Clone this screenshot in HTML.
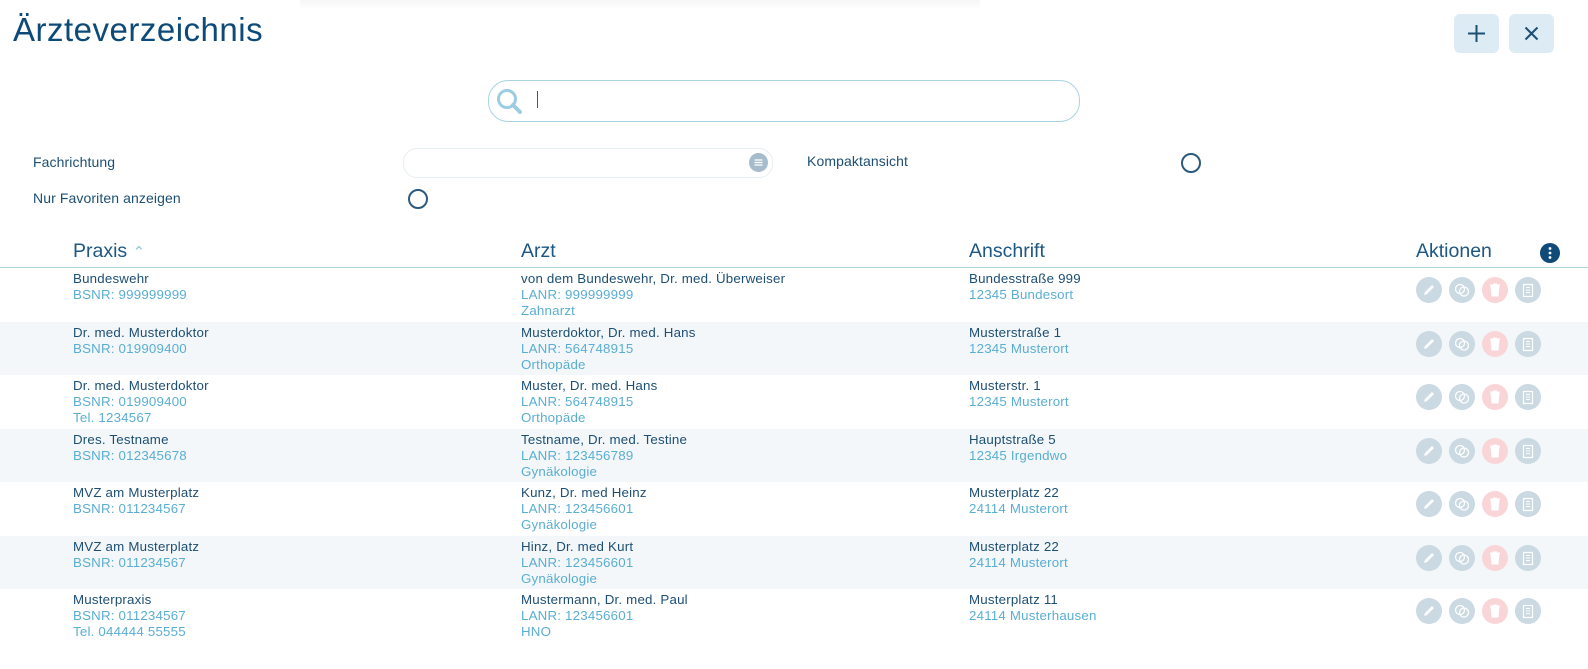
<!DOCTYPE html><html><head><meta charset="utf-8"><style>
body{margin:0;width:1588px;height:669px;overflow:hidden;background:#fff;font-family:"Liberation Sans",sans-serif;position:relative;color:#1d4f73}
.a{position:absolute}
h1{position:absolute;left:13px;top:11px;margin:0;font-weight:normal;font-size:33px;color:#0e4a78;letter-spacing:0.5px}
.btn{position:absolute;top:14px;width:45px;height:39px;background:#dcebf4;border-radius:6px}
.lbl{position:absolute;font-size:14px;color:#1d4f73;letter-spacing:0.1px}
.rad{position:absolute;width:16px;height:16px;border:2px solid #2b5a80;border-radius:50%}
.hd{position:absolute;top:240px;font-size:19.5px;color:#1d5784}
.row{position:absolute;left:0;width:1588px;height:53px}
.row.g{background:#f3f7f9}
.c{position:absolute;top:3px;font-size:13.3px;line-height:16px;letter-spacing:0.2px}
.c .l{color:#5aaed3}
.ic{position:absolute;top:9px;width:26px;height:26px;border-radius:50%;background:#cbd9e2}
.ic svg{position:absolute;left:0;top:0}
</style></head><body>
<div class="a" style="left:300px;top:0;width:680px;height:10px;background:linear-gradient(#f6f6f6,#fff)"></div>
<h1>Ärzteverzeichnis</h1>
<div class="btn" style="left:1454px"><svg width="45" height="39"><path d="M22.5 11v17M14 19.5h17" stroke="#1d4f73" stroke-width="2"/></svg></div>
<div class="btn" style="left:1509px"><svg width="45" height="39"><path d="M16.5 13.5l12 12M28.5 13.5l-12 12" stroke="#1d4f73" stroke-width="2"/></svg></div>
<div class="a" style="left:488px;top:80px;width:590px;height:40px;border:1px solid #a9d3e3;border-radius:20px"></div>
<svg class="a" style="left:494px;top:86px" width="32" height="30"><circle cx="13" cy="13" r="8.5" fill="none" stroke="#9ccde3" stroke-width="3"/><path d="M19 19l7 7" stroke="#9ccde3" stroke-width="4" stroke-linecap="round"/></svg>
<div class="a" style="left:537px;top:91px;width:1px;height:17px;background:#555"></div>
<div class="lbl" style="left:33px;top:154px">Fachrichtung</div>
<div class="lbl" style="left:33px;top:190px">Nur Favoriten anzeigen</div>
<div class="lbl" style="left:807px;top:153px">Kompaktansicht</div>
<div class="a" style="left:403px;top:148px;width:368px;height:28px;border:1px solid #e6eef2;border-radius:14px"></div>
<div class="a" style="left:749px;top:153px;width:19px;height:19px;border-radius:50%;background:#a6bccc"><svg width="19" height="19"><path d="M5.5 7h8M5.5 9.5h8M5.5 12h8" stroke="#fff" stroke-width="1.3"/></svg></div>
<div class="rad" style="left:1181px;top:153px"></div>
<div class="rad" style="left:408px;top:189px"></div>
<div class="hd" style="left:73px">Praxis <span style="color:#8fc6dc;font-size:15px">&#8963;</span></div>
<div class="hd" style="left:521px">Arzt</div>
<div class="hd" style="left:969px">Anschrift</div>
<div class="hd" style="left:1416px">Aktionen</div>
<div class="a" style="left:1540px;top:243px;width:20px;height:20px;border-radius:50%;background:#0f4a78"><svg width="20" height="20"><circle cx="10" cy="5.5" r="1.4" fill="#fff"/><circle cx="10" cy="10" r="1.4" fill="#fff"/><circle cx="10" cy="14.5" r="1.4" fill="#fff"/></svg></div>
<div class="a" style="left:0;top:267px;width:1588px;height:1px;background:#a8d2dc"></div>
<div id="rows"></div>
<script>
var d=[["Bundeswehr","BSNR: 999999999","","von dem Bundeswehr, Dr. med.  Überweiser","LANR: 999999999","Zahnarzt","Bundesstraße 999","12345 Bundesort"],
["Dr. med. Musterdoktor","BSNR: 019909400","","Musterdoktor, Dr. med. Hans","LANR: 564748915","Orthopäde","Musterstraße 1","12345 Musterort"],
["Dr. med. Musterdoktor","BSNR: 019909400","Tel. 1234567","Muster, Dr. med. Hans","LANR: 564748915","Orthopäde","Musterstr. 1","12345 Musterort"],
["Dres. Testname","BSNR: 012345678","","Testname, Dr. med. Testine","LANR: 123456789","Gynäkologie","Hauptstraße 5","12345 Irgendwo"],
["MVZ am Musterplatz","BSNR: 011234567","","Kunz, Dr. med Heinz","LANR: 123456601","Gynäkologie","Musterplatz 22","24114 Musterort"],
["MVZ am Musterplatz","BSNR: 011234567","","Hinz, Dr. med Kurt","LANR: 123456601","Gynäkologie","Musterplatz 22","24114 Musterort"],
["Musterpraxis","BSNR: 011234567","Tel. 044444 55555","Mustermann, Dr. med. Paul","LANR: 123456601","HNO","Musterplatz 11","24114 Musterhausen"]];
var tops=[268,322,375,429,482,536,589],h="";
var icons=['<path d="M8 18l1-3 7-7 2 2-7 7z" fill="#fff"/>','<circle cx="11" cy="12" r="4.5" fill="none" stroke="#fff" stroke-width="1.3"/><circle cx="15" cy="14.5" r="4.5" fill="none" stroke="#fff" stroke-width="1.3"/>','<path d="M8 8h10M11 7h4M9 9h8l-1 10h-6z" fill="#fff" stroke="#fff"/>','<rect x="8.5" y="7.5" width="9" height="12" fill="none" stroke="#fff" stroke-width="1.3"/><path d="M11 10.5h4M11 13h4M11 15.5h4" stroke="#fff"/>'];
d.forEach(function(r,i){h+='<div class="row'+(i%2?' g':'')+'" style="top:'+tops[i]+'px">';
h+='<div class="c" style="left:73px">'+r[0]+'<br><span class="l">'+r[1]+'<br>'+r[2]+'</span></div>';
h+='<div class="c" style="left:521px">'+r[3]+'<br><span class="l">'+r[4]+'<br>'+r[5]+'</span></div>';
h+='<div class="c" style="left:969px">'+r[6]+'<br><span class="l">'+r[7]+'</span></div>';
for(var k=0;k<4;k++)h+='<div class="ic" style="left:'+(1416+k*33)+'px;background:'+(k==2?'#fad5d8':'#cbd9e2')+'"><svg width="26" height="26">'+icons[k]+'</svg></div>';
h+='</div>';});
document.getElementById('rows').innerHTML=h;
</script>
</body></html>
